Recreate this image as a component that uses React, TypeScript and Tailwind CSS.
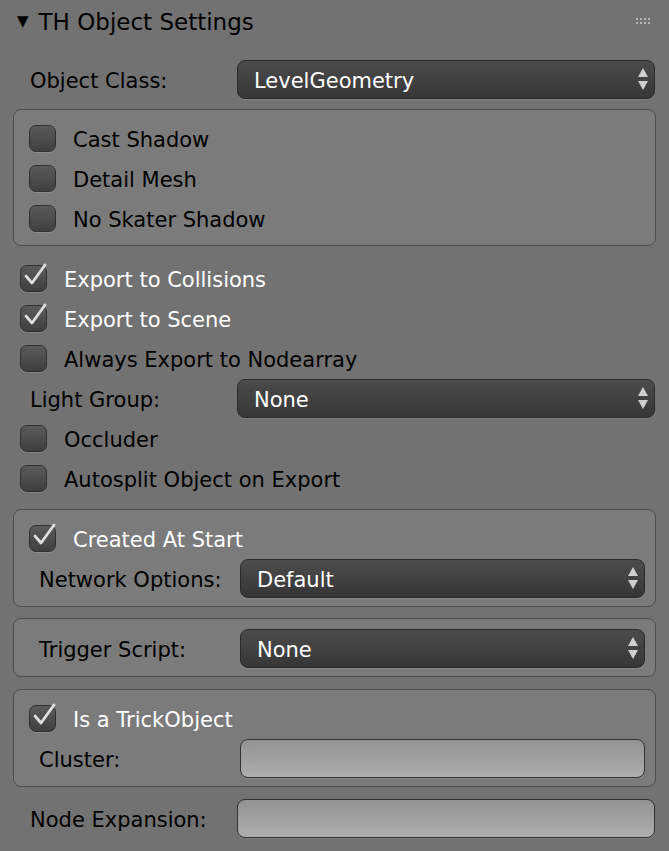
import React from "react";

const font = { fontFamily: '"DejaVu Sans", "Liberation Sans", sans-serif' };

const Check = ({ on }: { on?: boolean }) => (
  <div className="relative w-[27px] h-[27px] shrink-0 rounded-[7px] border border-[#303030] bg-gradient-to-b from-[#5a5a5a] to-[#404040] shadow-[0_1px_0_rgba(255,255,255,0.12)]">
    {on && (
      <svg className="absolute left-[-1px] top-[-4px]" width="30" height="28" viewBox="0 0 30 28">
        <path d="M6 14 L12 21 L25 3" fill="none" stroke="#dedede" strokeWidth="2.8" strokeLinecap="round" strokeLinejoin="round" />
      </svg>
    )}
  </div>
);

const CheckRow = ({ label, on }: { label: string; on?: boolean }) => (
  <div className="flex items-center h-10 gap-[17px]">
    <Check on={on} />
    <span className={`mt-[6px] text-[21px] ${on ? "text-white" : "text-black"}`}>{label}</span>
  </div>
);

const Arrows = () => (
  <svg width="12" height="30" viewBox="0 0 12 30">
    <path d="M6 4 L11 13 L1 13 Z" fill="#cfcfcf" />
    <path d="M1 17 L11 17 L6 26 Z" fill="#cfcfcf" />
  </svg>
);

const Dropdown = ({ value, w }: { value: string; w: string }) => (
  <div className={`${w} h-[39px] flex items-center justify-between pl-4 pr-[5px] rounded-[8px] border border-[#2a2a2a] bg-gradient-to-b from-[#4c4c4c] to-[#363636] shadow-[0_1px_0_rgba(255,255,255,0.1)]`}>
    <span className="mt-[5px] text-white text-[21px]">{value}</span>
    <Arrows />
  </div>
);

const Field = ({ w }: { w: string }) => (
  <div className={`${w} h-[39px] rounded-[8px] border border-[#333] bg-gradient-to-b from-[#939393] to-[#aeaeae] shadow-[0_1px_0_rgba(255,255,255,0.1)]`} />
);

const Label = ({ children, w }: { children: React.ReactNode; w: string }) => (
  <span className={`${w} mt-[6px] text-[21px] text-black shrink-0`}>{children}</span>
);

const Box = ({ children, extra = "" }: { children: React.ReactNode; extra?: string }) => (
  <div className={`mx-[13px] rounded-[8px] border border-[#4e4e4e] bg-[#7b7b7b] pr-[9px] ${extra}`}>
    {children}
  </div>
);

export default function App() {
  return (
    <div className="w-[669px] h-[851px] bg-[#727272] overflow-hidden" style={font}>
      <div className="flex items-center justify-between h-[42px] pl-[17px] pr-[19px]">
        <div className="flex items-center gap-[10px]">
          <span className="text-black text-[15px]">▼</span>
          <span className="mt-[2px] text-black text-[23px]">TH Object Settings</span>
        </div>
        <div className="grid grid-cols-4 gap-x-[2px] gap-y-[2px]">
          {Array.from({ length: 8 }).map((_, i) => (
            <div key={i} className="w-[2px] h-[2px] bg-[#b5b5b5]" />
          ))}
        </div>
      </div>

      <div className="flex items-center h-[40px] mt-[17px] pl-[30px]">
        <Label w="w-[207px]">Object Class:</Label>
        <Dropdown value="LevelGeometry" w="w-[418px]" />
      </div>

      <div className="mt-[10px]">
        <Box extra="pt-[8px] pb-[7px] pl-[15px]">
          <CheckRow label="Cast Shadow" />
          <CheckRow label="Detail Mesh" />
          <CheckRow label="No Skater Shadow" />
        </Box>
      </div>

      <div className="pl-[20px] mt-[12px]">
        <CheckRow label="Export to Collisions" on />
        <CheckRow label="Export to Scene" on />
        <CheckRow label="Always Export to Nodearray" />
      </div>
      <div className="flex items-center h-[40px] pl-[30px]">
        <Label w="w-[207px]">Light Group:</Label>
        <Dropdown value="None" w="w-[418px]" />
      </div>
      <div className="pl-[20px]">
        <CheckRow label="Occluder" />
        <CheckRow label="Autosplit Object on Export" />
      </div>

      <div className="mt-[11px]">
        <Box extra="py-[8px] pl-[15px]">
          <CheckRow label="Created At Start" on />
          <div className="flex items-center h-[40px] pl-[10px]">
            <Label w="w-[201px]">Network Options:</Label>
            <Dropdown value="Default" w="w-[405px]" />
          </div>
        </Box>
      </div>

      <div className="mt-[11px]">
        <Box extra="pt-[9px] pb-[8px] pl-[25px]">
          <div className="flex items-center h-[40px]">
            <Label w="w-[201px]">Trigger Script:</Label>
            <Dropdown value="None" w="w-[405px]" />
          </div>
        </Box>
      </div>

      <div className="mt-[12px]">
        <Box extra="py-[8px] pl-[15px]">
          <CheckRow label="Is a TrickObject" on />
          <div className="flex items-center h-[40px] pl-[10px]">
            <Label w="w-[201px]">Cluster:</Label>
            <Field w="w-[405px]" />
          </div>
        </Box>
      </div>

      <div className="flex items-center h-[40px] mt-[11px] pl-[30px]">
        <Label w="w-[207px]">Node Expansion:</Label>
        <Field w="w-[418px]" />
      </div>
    </div>
  );
}
